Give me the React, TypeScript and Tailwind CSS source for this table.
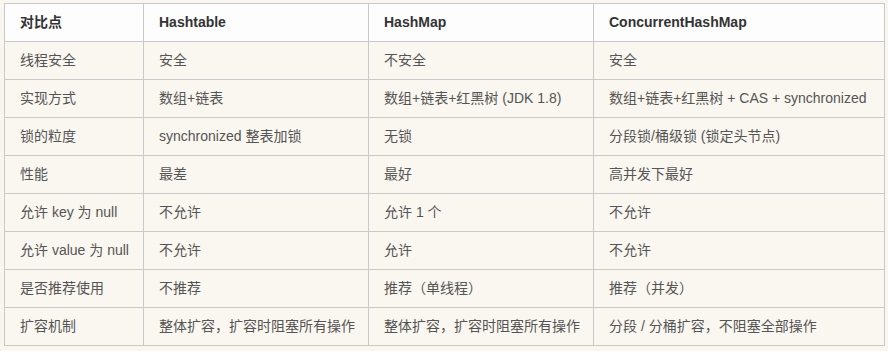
import React from "react";

const header = ["对比点", "Hashtable", "HashMap", "ConcurrentHashMap"];
const rows: string[][] = [
  ["线程安全", "安全", "不安全", "安全"],
  ["实现方式", "数组+链表", "数组+链表+红黑树 (JDK 1.8)", "数组+链表+红黑树 + CAS + synchronized"],
  ["锁的粒度", "synchronized 整表加锁", "无锁", "分段锁/桶级锁 (锁定头节点)"],
  ["性能", "最差", "最好", "高并发下最好"],
  ["允许 key 为 null", "不允许", "允许 1 个", "不允许"],
  ["允许 value 为 null", "不允许", "允许", "不允许"],
  ["是否推荐使用", "不推荐", "推荐（单线程）", "推荐（并发）"],
  ["扩容机制", "整体扩容，扩容时阻塞所有操作", "整体扩容，扩容时阻塞所有操作", "分段 / 分桶扩容，不阻塞全部操作"],
];

export default function App() {
  return (
    <div
      className="w-[888px] h-[351px] bg-[#f9f6ef] pt-[3px] pl-[4px]"
      style={{ fontFamily: '"Liberation Sans", "Noto Sans CJK SC", sans-serif' }}
    >
      <table className="table-fixed border-collapse w-[880px] text-[14px]">
        <colgroup>
          <col className="w-[139px]" />
          <col className="w-[225px]" />
          <col className="w-[225px]" />
          <col className="w-[291px]" />
        </colgroup>
        <thead>
          <tr className="h-[38px] bg-[#fdfdfd]">
            {header.map((h, i) => (
              <th
                key={i}
                className="border border-[#c9c9c9] px-[15px] text-left font-semibold text-[#333] whitespace-nowrap p-0"
              >
                {h}
              </th>
            ))}
          </tr>
        </thead>
        <tbody>
          {rows.map((r, ri) => (
            <tr key={ri} className="h-[38px] bg-[#faf7f0]">
              {r.map((c, ci) => (
                <td
                  key={ci}
                  className="border border-[#c9c9c9] px-[15px] text-left text-[#555] whitespace-nowrap"
                >
                  {c}
                </td>
              ))}
            </tr>
          ))}
        </tbody>
      </table>
    </div>
  );
}
